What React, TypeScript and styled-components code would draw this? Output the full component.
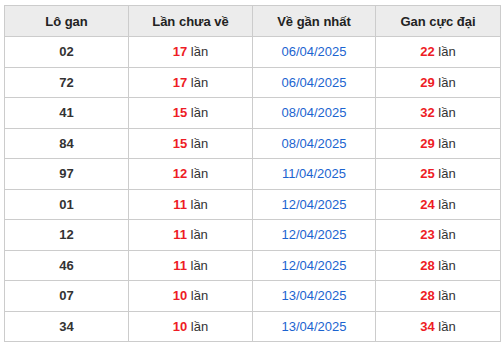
import { createGlobalStyle } from 'styled-components'
import styled from 'styled-components'

const GlobalStyle = createGlobalStyle`
  body {
    margin: 0;
    background: #fff;
    font-family: 'Liberation Sans', Arial, sans-serif;
  }
`

const SPage = styled.div`
  padding: 5px 3px 0 4px;
`

const STable = styled.table`
  width: 497px;
  border-collapse: collapse;
  table-layout: fixed;
  font-size: 13px;
  color: #333;

  th,
  td {
    border: 1px solid #ccc;
    text-align: center;
    padding: 0;
  }
`

const SHeadRow = styled.tr`
  height: 31px;
  background: #ececec;

  th {
    font-weight: bold;
    color: #222;
  }
`

const SRow = styled.tr`
  height: 30.5px;
`

const SNumber = styled.td`
  font-weight: bold;
  color: #333;
`

const SCount = styled.b<{ $bold?: boolean }>`
  color: #ee1c25;
  font-weight: bold;
`

const SDate = styled.td`
  color: #1c64d0;
`

type Row = { num: string; miss: number; last: string; max: number }

const rows: Row[] = [
  { num: '02', miss: 17, last: '06/04/2025', max: 22 },
  { num: '72', miss: 17, last: '06/04/2025', max: 29 },
  { num: '41', miss: 15, last: '08/04/2025', max: 32 },
  { num: '84', miss: 15, last: '08/04/2025', max: 29 },
  { num: '97', miss: 12, last: '11/04/2025', max: 25 },
  { num: '01', miss: 11, last: '12/04/2025', max: 24 },
  { num: '12', miss: 11, last: '12/04/2025', max: 23 },
  { num: '46', miss: 11, last: '12/04/2025', max: 28 },
  { num: '07', miss: 10, last: '13/04/2025', max: 28 },
  { num: '34', miss: 10, last: '13/04/2025', max: 34 },
]

export default function App() {
  return (
    <SPage>
      <GlobalStyle />
      <STable>
        <colgroup>
          <col style={{ width: 124 }} />
          <col style={{ width: 124 }} />
          <col style={{ width: 123 }} />
          <col style={{ width: 125 }} />
        </colgroup>
        <thead>
          <SHeadRow>
            <th>Lô gan</th>
            <th>Lần chưa về</th>
            <th>Về gần nhất</th>
            <th>Gan cực đại</th>
          </SHeadRow>
        </thead>
        <tbody>
          {rows.map((r) => (
            <SRow key={r.num}>
              <SNumber>{r.num}</SNumber>
              <td>
                <SCount>{r.miss}</SCount> lần
              </td>
              <SDate>{r.last}</SDate>
              <td>
                <SCount>{r.max}</SCount> lần
              </td>
            </SRow>
          ))}
        </tbody>
      </STable>
    </SPage>
  )
}
